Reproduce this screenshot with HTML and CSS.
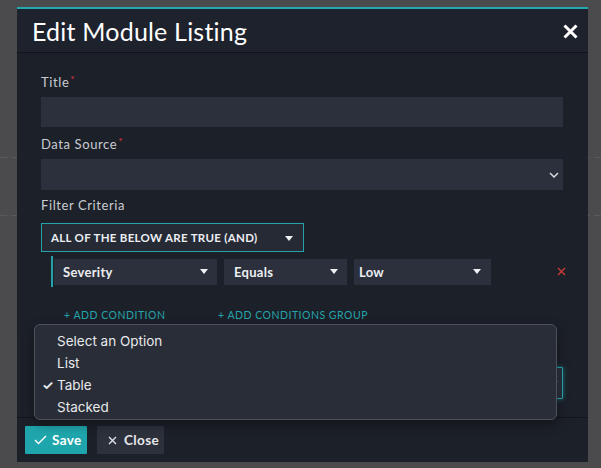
FILE: index.html
```html
<!DOCTYPE html>
<html>
<head>
<meta charset="utf-8">
<link rel="stylesheet" href="styles.css">
</head>
<body>
<div class="modal">
  <div class="header">
    <h1 class="title">Edit Module Listing</h1>
    <svg class="close-x" width="15" height="15" viewBox="0 0 15 15"><path d="M1.5 1.5L13.5 13.5M13.5 1.5L1.5 13.5" stroke="#fff" stroke-width="3"/></svg>
  </div>
  <div class="body">
    <div class="label l1">Title<span class="req">*</span></div>
    <div class="input i1"></div>
    <div class="label l2">Data Source<span class="req">*</span></div>
    <div class="input i2 sel">
      <svg class="chev" width="10" height="6" viewBox="0 0 10 6"><path d="M1 1L5 5L9 1" stroke="#d8dade" stroke-width="1.5" fill="none"/></svg>
    </div>
    <div class="label l3">Filter Criteria</div>
    <div class="andsel">
      <span>ALL OF THE BELOW ARE TRUE (AND)</span>
      <span class="caret"></span>
    </div>
    <div class="cond">
      <div class="bar"></div>
      <div class="csel s1"><span>Severity</span><span class="caret"></span></div>
      <div class="csel s2"><span>Equals</span><span class="caret"></span></div>
      <div class="csel s3"><span>Low</span><span class="caret"></span></div>
      <svg class="rm" width="9" height="9" viewBox="0 0 9 9"><path d="M1 1L8 8M8 1L1 8" stroke="#d23a3a" stroke-width="1.3"/></svg>
    </div>
    <div class="links">
      <span class="link l-a">+ ADD CONDITION</span>
      <span class="link l-b">+ ADD CONDITIONS GROUP</span>
    </div>
    <div class="spacer"></div>
    <div class="input i3 focus">
      <svg class="chev" width="10" height="6" viewBox="0 0 10 6"><path d="M1 1L5 5L9 1" stroke="#d8dade" stroke-width="1.5" fill="none"/></svg>
    </div>
  </div>
  <div class="footer">
    <button class="btn save"><svg width="13" height="10" viewBox="0 0 13 10"><path d="M1 5L4.5 8.5L12 1" stroke="#fff" stroke-width="1.4" fill="none"/></svg><span>Save</span></button>
    <button class="btn closeb"><svg width="9" height="9" viewBox="0 0 9 9"><path d="M1 1L8 8M8 1L1 8" stroke="#e6e7ea" stroke-width="1.3"/></svg><span>Close</span></button>
  </div>
</div>
<div class="menu">
  <div class="opt">Select an Option</div>
  <div class="opt">List</div>
  <div class="opt checked"><span class="check">✓</span>Table</div>
  <div class="opt">Stacked</div>
</div>
</body>
</html>
```

FILE: styles.css
```css
* { box-sizing: border-box; }
html, body { margin: 0; padding: 0; }
body {
  width: 601px;
  height: 468px;
  overflow: hidden;
  position: relative;
  background-color: #4b4b4d;
  background-image:
    repeating-linear-gradient(90deg, #5a5a5c 0 7px, transparent 7px 11px),
    repeating-linear-gradient(90deg, #5a5a5c 0 7px, transparent 7px 11px);
  background-size: 100% 1px, 100% 1px;
  background-position: 0 157px, 0 215px;
  background-repeat: no-repeat;
  font-family: Lato, "Liberation Sans", sans-serif;
  padding-top: 7px;
}
.modal {
  margin-left: 17px;
  width: 571px;
  height: 455px;
  background: #1c2029;
  border-top: 2px solid #23a9b0;
  display: flex;
  flex-direction: column;
}
.header {
  height: 44px;
  flex: none;
  background: #1e222c;
  border-bottom: 1px solid #111318;
  display: flex;
  align-items: center;
  justify-content: space-between;
  padding: 0 10px 0 15px;
}
.title {
  margin: 0;
  font-size: 25px;
  font-weight: 400;
  color: #fff;
  line-height: 28px;
  letter-spacing: 0.2px;
  margin-top: 1px;
}
.close-x { margin-top: 1px; }
.body {
  flex: 1;
  padding: 21px 25px 0 24px;
  display: flex;
  flex-direction: column;
  align-items: flex-start;
}
.label {
  font-size: 13px;
  height: 17px;
  line-height: 17px;
  color: #c9ccd2;
  letter-spacing: 0.6px;
}
.req { color: #e0343a; font-size: 10px; position: relative; top: -4px; margin-left: 1px; line-height: 0; }
.l1, .l2 { margin-bottom: 6px; }
.l3 { margin-bottom: 9px; }
.input {
  width: 522px;
  background: #2b303c;
  border-radius: 1px;
  flex: none;
}
.i1 { height: 30px; margin-bottom: 9px; }
.i2 { height: 31px; margin-bottom: 7px; }
.sel { display: flex; align-items: center; justify-content: flex-end; padding-right: 4px; }
.andsel {
  width: 263px;
  height: 29px;
  flex: none;
  border: 1px solid #25a3aa;
  background: #252a35;
  display: flex;
  align-items: center;
  justify-content: space-between;
  padding: 0 10px 0 9px;
  font-size: 11.5px;
  font-weight: 700;
  color: #eceef1;
  letter-spacing: 0.3px;
  margin-bottom: 4px;
}
.caret {
  width: 0; height: 0;
  border-left: 4.5px solid transparent;
  border-right: 4.5px solid transparent;
  border-top: 5px solid #eef0f2;
}
.andsel .caret { margin-top: 1px; }
.cond {
  display: flex;
  align-items: center;
  width: 522px;
  height: 31px;
  flex: none;
  padding-left: 10px;
}
.bar { width: 2px; height: 31px; background: #23a2a9; margin-right: 1px; }
.csel {
  height: 26px;
  background: #2b303c;
  display: flex;
  align-items: center;
  justify-content: space-between;
  font-size: 13px;
  font-weight: 700;
  color: #eceef1;
  letter-spacing: 0.3px;
}
.s1 { width: 163px; padding: 0 9px; margin-right: 7px; }
.s2 { width: 123px; padding: 0 9px 0 10px; margin-right: 7px; }
.s3 { width: 137px; padding: 0 10px 0 5px; }
.rm { margin-left: auto; margin-right: -3px; }
.links {
  display: flex;
  height: 18px;
  flex: none;
  align-items: center;
  margin-top: 19px;
  padding-left: 23px;
}
.link {
  font-size: 10.5px;
  color: #26a4ab;
  letter-spacing: 0.5px;
}
.l-a { width: 154px; }
.spacer { height: 43px; flex: none; }
.i3 { height: 32px; }
.focus {
  border: 1px solid #25a8b0;
  box-shadow: 0 0 5px rgba(37,168,176,0.6);
  display: flex; align-items: center; justify-content: flex-end; padding-right: 4px;
}
.footer {
  height: 45px;
  flex: none;
  border-top: 1px solid #12151a;
  display: flex;
  align-items: center;
  padding: 0 8px;
  gap: 10px;
}
.btn {
  height: 28px;
  border: 0;
  border-radius: 1px;
  display: flex;
  align-items: center;
  font-family: Lato, "Liberation Sans", sans-serif;
  font-size: 13.5px;
  font-weight: 700;
  color: #fff;
  letter-spacing: 0.4px;
  padding: 0;
}
.save { width: 62px; background: #1fa6ac; padding-left: 9px; gap: 5px; }
.closeb { width: 67px; background: #2c313c; padding-left: 11px; gap: 7px; color: #e6e7ea; }
.menu {
  position: absolute;
  left: 34px;
  top: 324px;
  width: 523px;
  height: 96px;
  background: #292d37;
  border: 1px solid #4d515a;
  border-radius: 6px;
  box-shadow: 0 4px 12px rgba(0,0,0,0.4);
  padding-top: 5px;
  font-family: Inter, "Noto Sans", sans-serif;
}
.opt {
  height: 22px;
  line-height: 22px;
  padding-left: 22px;
  font-size: 13.5px;
  color: #e8e9ec;
  position: relative;
}
.check { position: absolute; left: 7px; font-size: 13px; font-weight: 700; }
```
